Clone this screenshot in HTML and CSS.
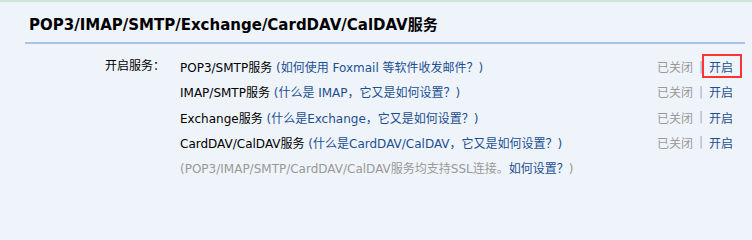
FILE: index.html
```html
<!DOCTYPE html>
<html lang="zh">
<head>
<meta charset="utf-8">
<link rel="stylesheet" href="styles.css">
</head>
<body>
<div class="topbar"></div>
<div class="panel">
  <h2 class="title">POP3/IMAP/SMTP/Exchange/CardDAV/CalDAV服务</h2>
  <div class="settings">
    <div class="label">开启服务：</div>
    <div class="rows">
      <div class="row">
        <div class="desc">POP3/SMTP服务 <a class="link">(如何使用 Foxmail 等软件收发邮件？)</a></div>
        <div class="status"><span class="off">已关闭</span><span class="sep">|</span><a class="on boxed">开启</a></div>
      </div>
      <div class="row">
        <div class="desc">IMAP/SMTP服务 <a class="link">(什么是 IMAP，它又是如何设置？)</a></div>
        <div class="status"><span class="off">已关闭</span><span class="sep">|</span><a class="on">开启</a></div>
      </div>
      <div class="row">
        <div class="desc">Exchange服务 <a class="link">(什么是Exchange，它又是如何设置？)</a></div>
        <div class="status"><span class="off">已关闭</span><span class="sep">|</span><a class="on">开启</a></div>
      </div>
      <div class="row">
        <div class="desc">CardDAV/CalDAV服务 <a class="link">(什么是CardDAV/CalDAV，它又是如何设置？)</a></div>
        <div class="status"><span class="off">已关闭</span><span class="sep">|</span><a class="on">开启</a></div>
      </div>
      <div class="row">
        <div class="note">(POP3/IMAP/SMTP/CardDAV/CalDAV服务均支持SSL连接。<a class="link">如何设置？</a>)</div>
      </div>
    </div>
  </div>
</div>
</body>
</html>
```
FILE: styles.css
```css
html, body {
  margin: 0;
  padding: 0;
  background: #eff4fb;
  font-family: "DejaVu Sans", "Noto Sans CJK SC", sans-serif;
  font-size: 12px;
  color: #000;
}
.topbar {
  height: 2px;
  background: #cde6d3;
}
.panel {
  padding: 13px 7px 0 25px;
}
.title {
  margin: 0;
  padding: 0 0 7px 4px;
  font-size: 15px;
  font-weight: bold;
  line-height: 20px;
  color: #000;
  border-bottom: 2px solid #a8c5e8;
}
.settings {
  display: flex;
  padding-top: 10px;
}
.label {
  width: 140px;
  text-align: right;
  padding-right: 15px;
  line-height: 25.25px;
}
.rows {
  flex: 1;
}
.row {
  display: flex;
  justify-content: space-between;
  align-items: center;
  height: 25.25px;
}
.link {
  color: #1c4f91;
}
.note {
  color: #999;
}
.status {
  display: flex;
  align-items: center;
  padding-right: 12px;
}
.off {
  color: #999;
}
.sep {
  color: #a3aebd;
  margin: 0 6px 0 6px;
}
.on {
  color: #1c4f91;
  position: relative;
}
.boxed::after {
  content: "";
  position: absolute;
  left: -7px;
  right: -9px;
  top: -4px;
  bottom: -3px;
  border: 2px solid #f33;
}
```
